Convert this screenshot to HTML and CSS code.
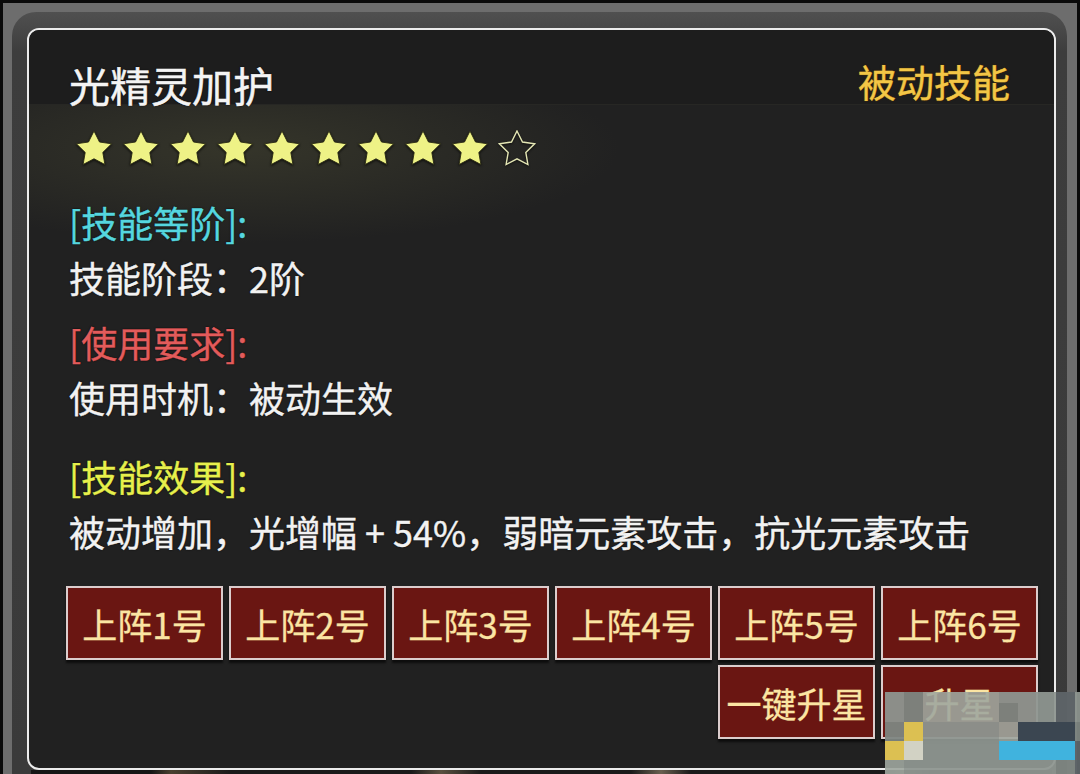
FILE: index.html
```html
<!DOCTYPE html>
<html lang="zh-CN">
<head>
    <meta charset="UTF-8">
    <title>技能详情</title>
    <link rel="stylesheet" href="styles.css">
</head>
<body>
    <svg class="defs" width="0" height="0">
        <defs>
            <polygon id="star" points="19,1 24.5,12 36.6,13.8 27.8,22.4 29.9,34.5 19,28.8 8.1,34.5 10.2,22.4 1.4,13.8 13.5,12"/>
        </defs>
    </svg>
    <div class="frame">
        <div class="window">
            <section class="panel">
                <header class="panel-head">
                    <h1 class="skill-name">光精灵加护</h1>
                    <span class="skill-type">被动技能</span>
                </header>
                <div class="stars">
                    <svg class="star" viewBox="0 0 38 38"><use href="#star"/></svg>
                    <svg class="star" viewBox="0 0 38 38"><use href="#star"/></svg>
                    <svg class="star" viewBox="0 0 38 38"><use href="#star"/></svg>
                    <svg class="star" viewBox="0 0 38 38"><use href="#star"/></svg>
                    <svg class="star" viewBox="0 0 38 38"><use href="#star"/></svg>
                    <svg class="star" viewBox="0 0 38 38"><use href="#star"/></svg>
                    <svg class="star" viewBox="0 0 38 38"><use href="#star"/></svg>
                    <svg class="star" viewBox="0 0 38 38"><use href="#star"/></svg>
                    <svg class="star" viewBox="0 0 38 38"><use href="#star"/></svg>
                    <svg class="star star-empty" viewBox="0 0 38 38"><use href="#star"/></svg>
                </div>
                <div class="block">
                    <p class="tag tag-grade">[技能等阶]:</p>
                    <p class="line">技能阶段：2阶</p>
                </div>
                <div class="block">
                    <p class="tag tag-req">[使用要求]:</p>
                    <p class="line">使用时机：被动生效</p>
                </div>
                <div class="block block-effect">
                    <p class="tag tag-effect">[技能效果]:</p>
                    <p class="line">被动增加，光增幅 + 54%，弱暗元素攻击，抗光元素攻击</p>
                </div>
                <div class="actions">
                    <button type="button">上阵1号</button>
                    <button type="button">上阵2号</button>
                    <button type="button">上阵3号</button>
                    <button type="button">上阵4号</button>
                    <button type="button">上阵5号</button>
                    <button type="button">上阵6号</button>
                    <button type="button" class="col-5">一键升星</button>
                    <button type="button">升星</button>
                </div>
            </section>
            <div class="shelf"></div>
        </div>
    </div>
    <!-- pixelated corner -->
    <div class="mosaic">
        <i class="m1"></i><i class="m2"></i><i class="m3"></i><i class="m3"></i><i class="m3"></i><i class="m3"></i><i class="m1"></i><i class="m1"></i><i class="m1"></i><i class="m5"></i><i class="m1"></i>
        <i class="m1"></i><i class="m2"></i><i class="m3"></i><i class="m3"></i><i class="m3"></i><i class="m3"></i><i class="m2"></i><i class="m1"></i><i class="m1"></i><i class="m5"></i><i class="m1"></i>
        <i class="m2"></i><i class="m4"></i><i class="m1"></i><i class="m1"></i><i class="m1"></i><i class="m1"></i><i class="m3"></i><i class="m6"></i><i class="m6"></i><i class="m6"></i><i class="m2"></i>
        <i class="m4"></i><i class="m7"></i><i class="m1"></i><i class="m1"></i><i class="m1"></i><i class="m1"></i><i class="m8"></i><i class="m8"></i><i class="m8"></i><i class="m8"></i><i class="m5"></i>
        <i class="m3"></i><i class="m1"></i><i class="m1"></i><i class="m1"></i><i class="m1"></i><i class="m1"></i><i class="m1"></i><i class="m1"></i><i class="m1"></i><i class="m2"></i><i class="m5"></i>
    </div>
</body>
</html>
```

FILE: styles.css
```css
body {
    margin: 0;
    height: 774px;
    overflow: hidden;
    background: #0a0a0a;
    font-family: "Noto Sans CJK SC", "Noto Sans", sans-serif;
    position: relative;
}
.defs {
    position: absolute;
}
.frame {
    margin: 3px 3px 0 3px;
    padding: 9px 10px 0 9px;
    height: 771px;
    box-sizing: border-box;
    overflow: hidden;
    background: #6d6d6d;
}
.window {
    padding: 16px 11px 0 15px;
    height: 100%;
    box-sizing: border-box;
    border-radius: 24px 24px 0 0;
    background: linear-gradient(#505050, #3d3d3d 40px, #3a3a3a);
}
.panel {
    box-sizing: border-box;
    height: 742px;
    border: 2px solid #ececec;
    border-radius: 12px;
    /* faint glow behind the star row */
    background: radial-gradient(ellipse 380px 95px at 210px 118px, rgba(58, 58, 44, 0.8), rgba(33, 33, 33, 0)) #212121;
    overflow: hidden;
}
.panel-head {
    display: flex;
    justify-content: space-between;
    align-items: flex-start;
    height: 75px;
    box-sizing: border-box;
    padding: 34px 44px 0 40px;
    background: #1d1d1d;
    border-bottom: 1px solid #272724;
}
.skill-name {
    margin: 0;
    font-size: 41px;
    font-weight: normal;
    line-height: 1;
    color: #f4f4f4;
    -webkit-text-stroke: 0.5px #f4f4f4;
    text-shadow: 0 0 2px #000;
}
.skill-type {
    font-size: 38px;
    line-height: 1;
    margin-top: -2px;
    color: #f3c646;
    -webkit-text-stroke: 0.4px #f3c646;
    text-shadow: 0 0 2px #4a2e00, 0 0 1px #4a2e00;
}
.stars {
    display: flex;
    gap: 9px;
    height: 80px;
    box-sizing: border-box;
    padding: 25px 0 0 46px;
}
.star {
    flex: none;
    width: 38px;
    height: 38px;
    fill: #eef286;
    stroke: #2a2a14;
    stroke-width: 0.9;
    filter: drop-shadow(0 1px 1px rgba(0, 0, 0, 0.7));
}
.star-empty {
    fill: none;
    stroke: #e4e6b4;
    stroke-width: 1.4;
}
.block {
    margin-top: 10px;
    padding-left: 40px;
}
.block-effect {
    margin-top: 24px;
}
.tag, .line {
    margin: 0;
    font-size: 36px;
    line-height: 55px;
    white-space: nowrap;
    -webkit-text-stroke: 0.4px currentColor;
    text-shadow: 0 0 2px #000;
}
.line {
    color: #f2f2f2;
}
.tag-grade {
    color: #55d6df;
}
.tag-req {
    color: #e35b5b;
}
.tag-effect {
    color: #e7f04c;
}
.actions {
    display: grid;
    grid-template-columns: repeat(6, 157px);
    grid-auto-rows: 74px;
    gap: 5px 6px;
    margin-top: 27px;
    padding-left: 37px;
}
.actions button {
    margin: 0;
    padding: 0;
    border: 2px solid #dccdcd;
    background: #6a1612;
    color: #fbe5a3;
    font-family: inherit;
    font-size: 35px;
    line-height: 1;
    -webkit-text-stroke: 0.3px #fbe5a3;
    box-shadow: 0 3px 2px rgba(0, 0, 0, 0.6);
}
.actions .col-5 {
    grid-column: 5;
}
.shelf {
    height: 30px;
    margin: 0 4px;
    background: linear-gradient(90deg, #161616 0 120px, #4a4030 140px, #1a1a1a 200px 380px, #5a5040 410px, #1a1a1a 450px 600px, #6a6050 630px, #1a1a1a 660px 850px, #4a4a40 880px, #1a1a1a 900px);
}
.mosaic {
    position: absolute;
    left: 885px;
    top: 692px;
    display: grid;
    grid-template-columns: repeat(10, 19px) 5px;
    grid-template-rows: 11px repeat(4, 19px);
}
.mosaic i {
    display: block;
}
.m1 { background: rgba(142, 150, 144, 0.94); }
.m2 { background: rgba(126, 134, 130, 0.95); }
.m3 { background: rgba(158, 166, 158, 0.9); }
.m4 { background: #dcc052; }
.m5 { background: rgba(94, 100, 104, 0.96); }
.m6 { background: #3b4651; }
.m7 { background: #d2d2c4; }
.m8 { background: #40b3de; }
```
